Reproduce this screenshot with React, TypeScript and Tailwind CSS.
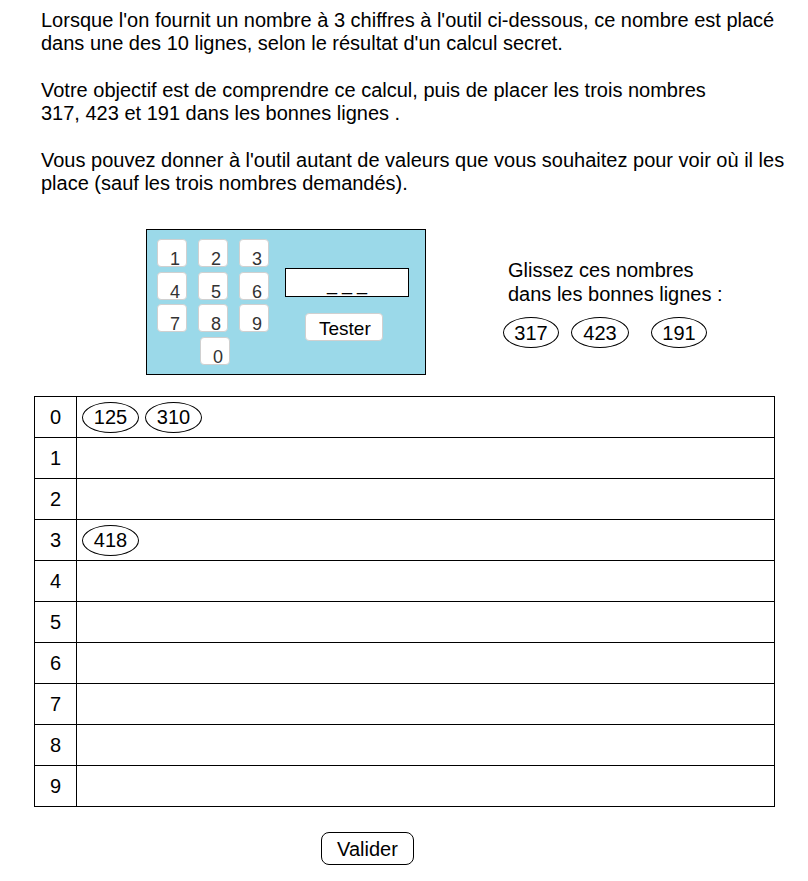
import React from 'react';

const FONT = { fontFamily: '"Liberation Sans", Arial, sans-serif' };

const KEYS = ['1', '2', '3', '4', '5', '6', '7', '8', '9'];
const TO_PLACE = ['317', '423', '191'];
const ROWS: Record<number, string[]> = { 0: ['125', '310'], 3: ['418'] };

function Oval({ n, className = '' }: { n: string; className?: string }) {
  return (
    <span
      className={`inline-flex items-center justify-center h-[31px] border border-black rounded-[50%] text-[20px] leading-none text-black ${className}`}
    >
      {n}
    </span>
  );
}

function Key({ d, className = '' }: { d: string; className?: string }) {
  return (
    <div
      className={`w-[30px] h-[28px] bg-white border border-[#d0d0d0] rounded-[4px] flex items-end justify-end pr-[6px] pb-[1px] text-[18px] leading-[12px] text-[#333] ${className}`}
    >
      {d}
    </div>
  );
}

export default function App() {
  return (
    <div className="bg-white text-black min-h-[881px] w-[808px]" style={FONT}>
      {/* Consigne */}
      <div className="pl-[41px] pt-[9px] text-[20px] leading-[23.3px]">
        <p>
          Lorsque l'on fournit un nombre à 3 chiffres à l'outil ci-dessous, ce nombre est placé
          <br />
          dans une des 10 lignes, selon le résultat d'un calcul secret.
        </p>
        <p className="mt-[23.3px]">
          Votre objectif est de comprendre ce calcul, puis de placer les trois nombres
          <br />
          317, 423 et 191 dans les bonnes lignes .
        </p>
        <p className="mt-[23.3px]">
          Vous pouvez donner à l'outil autant de valeurs que vous souhaitez pour voir où il les
          <br />
          place (sauf les trois nombres demandés).
        </p>
      </div>

      {/* Outil + nombres à placer */}
      <div className="flex mt-[34px]">
        <div className="ml-[146px] w-[280px] h-[146px] bg-[#9bd9e9] border border-black flex pl-[10px] pt-[9px]">
          <div className="flex flex-col gap-[4.5px]">
            <div className="grid grid-cols-3 gap-x-[11px] gap-y-[4.5px] w-[112px]">
              {KEYS.map((k) => (
                <Key key={k} d={k} />
              ))}
            </div>
            <Key d="0" className="ml-[43px]" />
          </div>
          <div className="ml-[16px] pt-[29px] flex flex-col">
            <div className="w-[124px] h-[29px] bg-white border border-black flex items-center justify-center text-[18px] pt-[4px]">
              _ _ _
            </div>
            <button className="mt-[16px] ml-[20px] w-[78px] h-[28px] bg-white border border-[#d0d0d0] rounded-[4px] text-[19px] leading-none pl-[13px] pt-[2px] text-left">
              Tester
            </button>
          </div>
        </div>

        <div className="ml-[77px] pt-[29px]">
          <div className="text-[20px] leading-[24px] pl-[5px]">
            Glissez ces nombres
            <br />
            dans les bonnes lignes :
          </div>
          <div className="flex mt-[11px]">
            <Oval n={TO_PLACE[0]} className="w-[56px]" />
            <Oval n={TO_PLACE[1]} className="w-[58px] ml-[12px]" />
            <Oval n={TO_PLACE[2]} className="w-[56px] ml-[22px]" />
          </div>
        </div>
      </div>

      {/* Tableau des lignes */}
      <table className="ml-[34px] mt-[21px] w-[741px] border-collapse">
        <tbody>
          {Array.from({ length: 10 }, (_, i) => (
            <tr key={i} className="h-[41px]">
              <td className="w-[42px] border border-black text-center text-[20px] leading-none">{i}</td>
              <td className="border border-black pl-[5px] align-middle">
                <div className="flex gap-[6px]">
                  {(ROWS[i] || []).map((n) => (
                    <Oval key={n} n={n} className="w-[57px]" />
                  ))}
                </div>
              </td>
            </tr>
          ))}
        </tbody>
      </table>

      <button className="ml-[321px] mt-[25px] w-[93px] h-[33px] border border-black rounded-[8px] bg-white text-[20px] leading-none">
        Valider
      </button>
    </div>
  );
}
